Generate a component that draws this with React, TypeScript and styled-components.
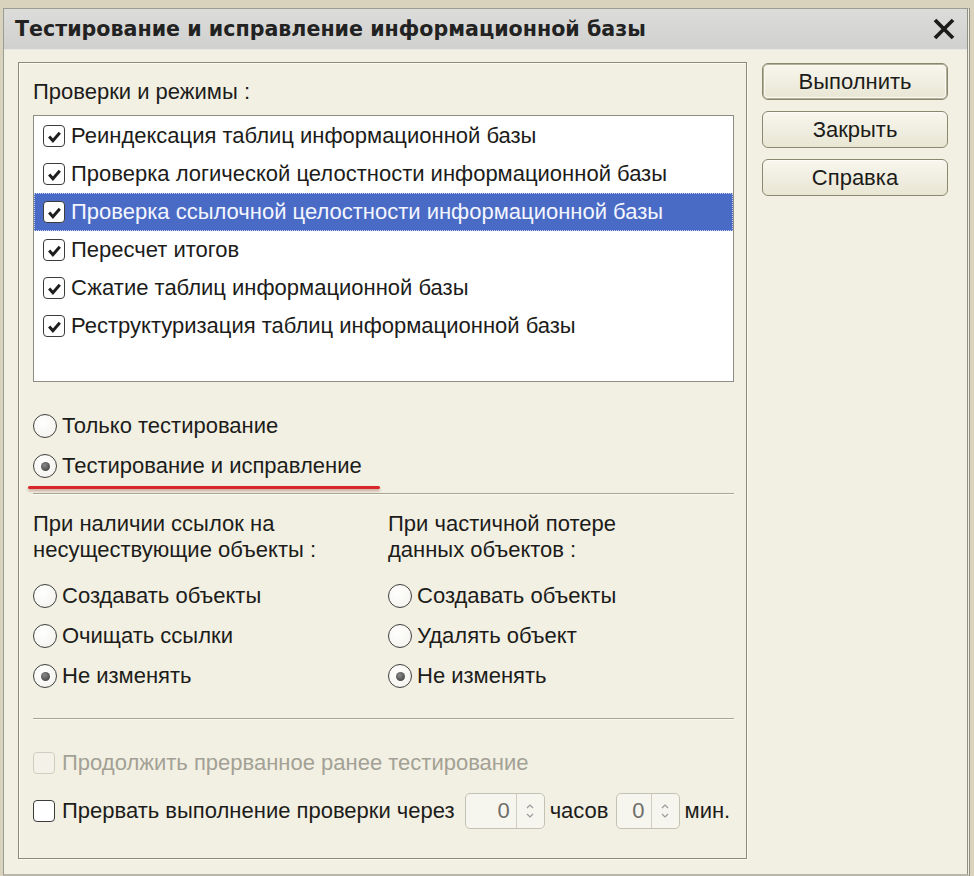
import React from "react";
import styled, { createGlobalStyle } from "styled-components";

const GlobalStyle = createGlobalStyle`
  html, body {
    margin: 0;
    padding: 0;
    background: #d9d3bd;
  }
  * {
    box-sizing: border-box;
  }
`;

const checks = [
  "Реиндексация таблиц информационной базы",
  "Проверка логической целостности информационной базы",
  "Проверка ссылочной целостности информационной базы",
  "Пересчет итогов",
  "Сжатие таблиц информационной базы",
  "Реструктуризация таблиц информационной базы",
];

export default function App() {
  return (
    <>
      <GlobalStyle />
      <Page>
        <Window>
          <TitleBar>
            <Title>Тестирование и исправление информационной базы</Title>
            <CloseIcon viewBox="0 0 20 20">
              <path d="M3 3 L17 17 M17 3 L3 17" stroke="#1b1b1b" strokeWidth="3.4" strokeLinecap="square" />
            </CloseIcon>
          </TitleBar>
          <Body>
            <Frame>
              <Label>Проверки и режимы :</Label>
              <List>
                {checks.map((c, i) => (
                  <ListRow key={c} selected={i === 2}>
                    <CheckBox checked />
                    <RowText selected={i === 2}>{c}</RowText>
                  </ListRow>
                ))}
              </List>

              <ModeGroup>
                <OptionRow>
                  <Radio />
                  <Text>Только тестирование</Text>
                </OptionRow>
                <OptionRow>
                  <Radio checked />
                  <Text>Тестирование и исправление</Text>
                  <Marker />
                </OptionRow>
              </ModeGroup>

              <Separator />

              <Columns>
                <Column>
                  <Caption>
                    При наличии ссылок на
                    <br />
                    несуществующие объекты :
                  </Caption>
                  <OptionRow>
                    <Radio />
                    <Text>Создавать объекты</Text>
                  </OptionRow>
                  <OptionRow>
                    <Radio />
                    <Text>Очищать ссылки</Text>
                  </OptionRow>
                  <OptionRow>
                    <Radio checked />
                    <Text>Не изменять</Text>
                  </OptionRow>
                </Column>
                <Column>
                  <Caption>
                    При частичной потере
                    <br />
                    данных объектов :
                  </Caption>
                  <OptionRow>
                    <Radio />
                    <Text>Создавать объекты</Text>
                  </OptionRow>
                  <OptionRow>
                    <Radio />
                    <Text>Удалять объект</Text>
                  </OptionRow>
                  <OptionRow>
                    <Radio checked />
                    <Text>Не изменять</Text>
                  </OptionRow>
                </Column>
              </Columns>

              <Separator />

              <BottomGroup>
                <BottomRow>
                  <CheckBox disabled />
                  <Text disabled>Продолжить прерванное ранее тестирование</Text>
                </BottomRow>
                <BottomRow>
                  <CheckBox />
                  <Text>Прервать выполнение проверки через</Text>
                  <Spinner width={80} pad={5}>
                    <SpinValue>0</SpinValue>
                    <SpinArrows>
                      <Arrow viewBox="0 0 10 6">
                        <path d="M2 5 L5 2 L8 5" stroke="#9a9a9a" strokeWidth="1.2" fill="none" />
                      </Arrow>
                      <Arrow viewBox="0 0 10 6">
                        <path d="M2 1 L5 4 L8 1" stroke="#9a9a9a" strokeWidth="1.2" fill="none" />
                      </Arrow>
                    </SpinArrows>
                  </Spinner>
                  <Text>часов</Text>
                  <Spinner width={64} pad={2}>
                    <SpinValue>0</SpinValue>
                    <SpinArrows>
                      <Arrow viewBox="0 0 10 6">
                        <path d="M2 5 L5 2 L8 5" stroke="#9a9a9a" strokeWidth="1.2" fill="none" />
                      </Arrow>
                      <Arrow viewBox="0 0 10 6">
                        <path d="M2 1 L5 4 L8 1" stroke="#9a9a9a" strokeWidth="1.2" fill="none" />
                      </Arrow>
                    </SpinArrows>
                  </Spinner>
                  <Text>мин.</Text>
                </BottomRow>
              </BottomGroup>
            </Frame>

            <Buttons>
              <Button primary>Выполнить</Button>
              <Button>Закрыть</Button>
              <Button>Справка</Button>
            </Buttons>
          </Body>
        </Window>
      </Page>
    </>
  );
}

function CheckBox({ checked, disabled }: { checked?: boolean; disabled?: boolean }) {
  return (
    <Box disabled={disabled}>
      {checked && (
        <svg width="17" height="17" viewBox="0 0 16 16">
          <path d="M3 8 L6.5 12 L13 4.5" stroke="#1e1e1e" strokeWidth="2.8" fill="none" />
        </svg>
      )}
    </Box>
  );
}

function Radio({ checked }: { checked?: boolean }) {
  return <RadioCircle>{checked && <Dot />}</RadioCircle>;
}

const Page = styled.div`
  width: 974px;
  height: 876px;
  padding: 8px 4px 0 3px;
  font-family: "Liberation Sans", Arial, sans-serif;
  color: #1c1c1a;
`;

const Window = styled.div`
  height: 868px;
  background: #f2f0e3;
  border: 1px solid #9c9c94;
  border-right: 3px double #8e8e84;
  border-bottom: 2px solid #b8b6a8;
  display: flex;
  flex-direction: column;
`;

const TitleBar = styled.div`
  height: 41px;
  background: linear-gradient(#dcdcda, #d0d0ce);
  border-bottom: 1px solid #e8e8e4;
  display: flex;
  align-items: center;
  justify-content: space-between;
  padding: 0 12px 0 11px;
`;

const Title = styled.div`
  font-family: "DejaVu Sans", "Liberation Sans", sans-serif;
  font-weight: bold;
  font-size: 20.6px;
  color: #222;
`;

const CloseIcon = styled.svg`
  width: 22px;
  height: 22px;
`;

const Body = styled.div`
  flex: 1;
  display: flex;
  padding: 12px 0 0 14px;
`;

const Frame = styled.div`
  width: 729px;
  height: 797px;
  border: 1px solid #8b8a72;
  box-shadow: inset 1px 1px 0 #fbfaf4, 1px 1px 0 #fbfaf4;
  padding: 15px 12px 0 14px;
  display: flex;
  flex-direction: column;
`;

const Label = styled.div`
  font-size: 22px;
  line-height: 24px;
  height: 37px;
  padding-top: 2px;
`;

const List = styled.div`
  height: 267px;
  background: #ffffff;
  border: 1px solid #8e8d84;
  padding-top: 1px;
`;

const ListRow = styled.div<{ selected?: boolean }>`
  height: 38px;
  display: flex;
  align-items: center;
  padding-left: 9px;
  background: ${(p) => (p.selected ? "#4a6bc5" : "transparent")};
  outline: ${(p) => (p.selected ? "1px dotted #c8d2ee" : "none")};
  outline-offset: -1px;
`;

const RowText = styled.span<{ selected?: boolean }>`
  font-size: 22px;
  margin-left: 6px;
  color: ${(p) => (p.selected ? "#f4f6ff" : "#1c1c1a")};
`;

const Box = styled.span<{ disabled?: boolean }>`
  width: 22px;
  height: 22px;
  flex: none;
  border: 1.5px solid ${(p) => (p.disabled ? "#cfcdc0" : "#3c3c3a")};
  border-radius: 4px;
  background: ${(p) => (p.disabled ? "#f4f2e8" : "#ffffff")};
  display: flex;
  align-items: center;
  justify-content: center;
`;

const ModeGroup = styled.div`
  padding-top: 24px;
  padding-bottom: 7px;
`;

const OptionRow = styled.div`
  position: relative;
  height: 40px;
  display: flex;
  align-items: center;
`;

const Marker = styled.span`
  position: absolute;
  left: -5px;
  top: 40px;
  width: 352px;
  height: 3px;
  border-radius: 2px;
  background: #d9262b;
  box-shadow: 0 2px 3px rgba(120, 20, 20, 0.35);
`;

const RadioCircle = styled.span`
  width: 24px;
  height: 24px;
  flex: none;
  border-radius: 50%;
  border: 1.5px solid #3f3f3c;
  background: radial-gradient(circle at 40% 35%, #ffffff, #f1f0ea);
  display: flex;
  align-items: center;
  justify-content: center;
  margin-right: 5px;
`;

const Dot = styled.span`
  width: 9px;
  height: 9px;
  border-radius: 50%;
  background: radial-gradient(circle at 40% 35%, #8a8a8a, #333);
`;

const Text = styled.span<{ disabled?: boolean }>`
  font-size: 22px;
  white-space: nowrap;
  color: ${(p) => (p.disabled ? "#a3a195" : "#1c1c1a")};
`;

const Separator = styled.div`
  height: 2px;
  border-top: 1px solid #a9a792;
  border-bottom: 1px solid #fbfaf2;
`;

const Columns = styled.div`
  display: grid;
  grid-template-columns: 355px 1fr;
  padding-top: 16px;
  padding-bottom: 22px;
`;

const Column = styled.div`
  display: flex;
  flex-direction: column;
`;

const Caption = styled.div`
  font-size: 22px;
  line-height: 26px;
  margin-bottom: 13px;
`;

const BottomGroup = styled.div`
  padding-top: 25px;
  display: flex;
  flex-direction: column;
  gap: 12px;
`;

const BottomRow = styled.div`
  height: 36px;
  display: flex;
  align-items: center;
  gap: 5px;

  & > ${Box} {
    margin-right: 2px;
  }
`;

const Spinner = styled.div<{ width: number; pad: number }>`
  width: ${(p) => p.width}px;
  height: 36px;
  margin: 0 0 0 ${(p) => p.pad}px;
  border: 1px solid #c4c2b4;
  border-radius: 5px;
  background: #f6f5ee;
  display: flex;
  align-items: stretch;
`;

const SpinValue = styled.span`
  flex: 1;
  display: flex;
  align-items: center;
  justify-content: flex-end;
  padding-right: 6px;
  font-size: 22px;
  color: #6e6e6a;
`;

const SpinArrows = styled.span`
  width: 28px;
  border-left: 1px solid #d0cec2;
  display: flex;
  flex-direction: column;
  align-items: center;
  justify-content: center;
  gap: 4px;
`;

const Arrow = styled.svg`
  width: 10px;
  height: 6px;
`;

const Buttons = styled.div`
  display: flex;
  flex-direction: column;
  gap: 11px;
  margin-left: 15px;
  padding-top: 1px;
`;

const Button = styled.button<{ primary?: boolean }>`
  width: 186px;
  height: 37px;
  border-radius: 6px;
  border: 1px solid #8b8870;
  box-shadow: ${(p) => (p.primary ? "inset 0 0 0 1px #b2af98, inset 0 0 0 2px #fbfaf2" : "inset 0 1px 0 #fdfcf6")};
  background: linear-gradient(#f8f7ee, #e8e5d3);
  font-family: "Liberation Sans", Arial, sans-serif;
  font-size: 22px;
  color: #1c1c1a;
  padding: 0;
`;
